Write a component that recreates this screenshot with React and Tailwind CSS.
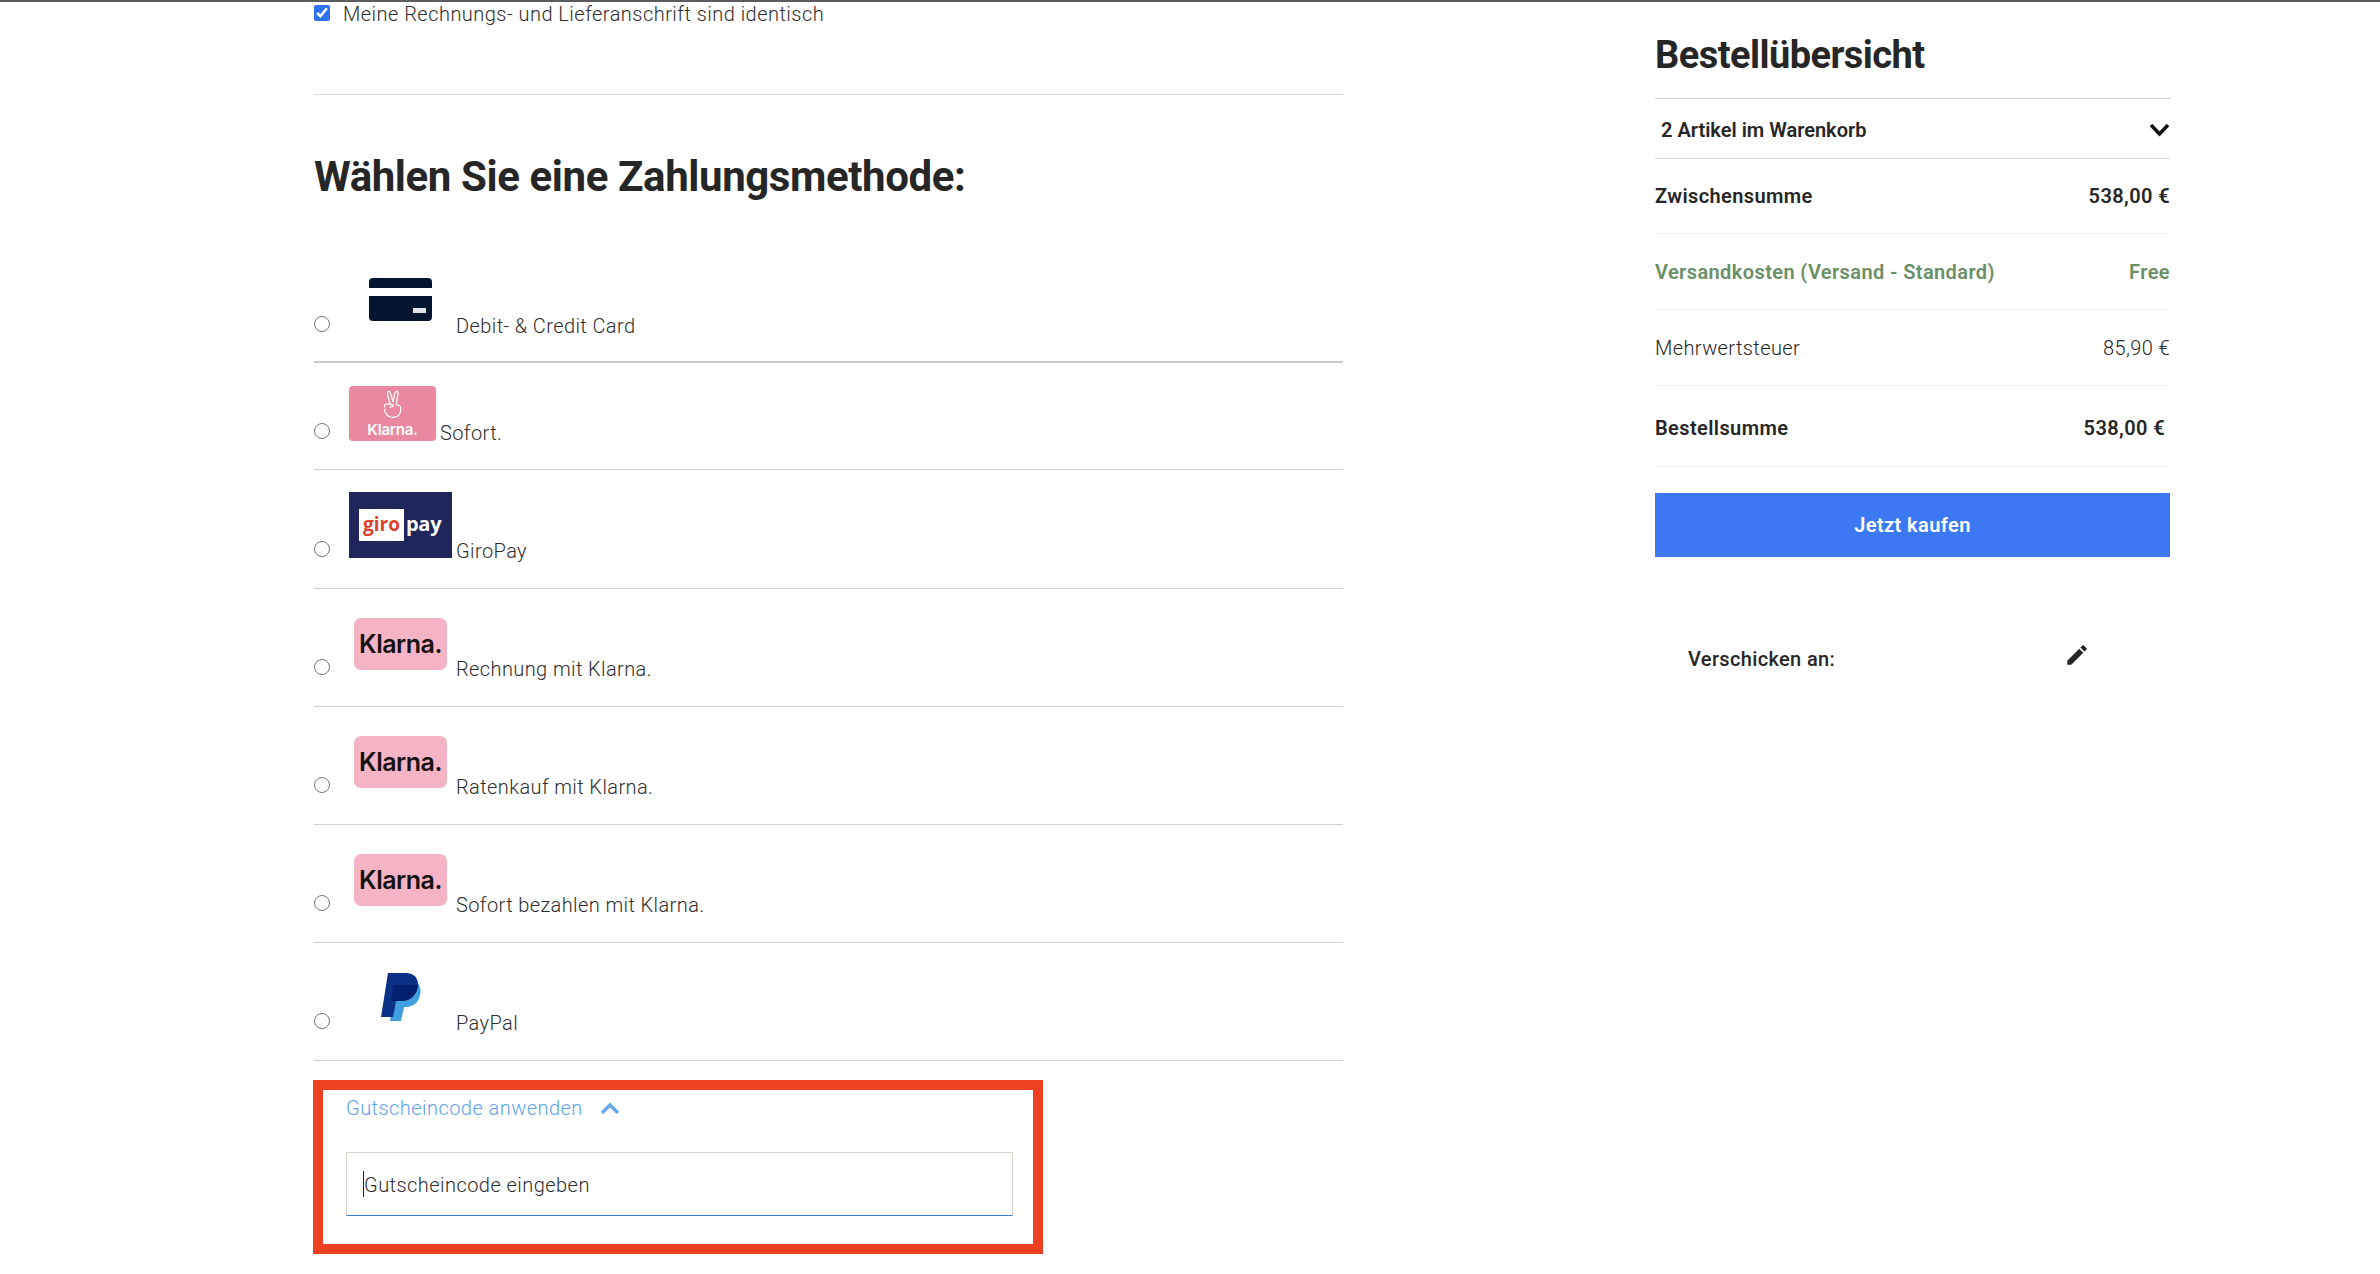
import { MdEdit } from "react-icons/md";

const fontStack = { fontFamily: "Roboto, 'Liberation Sans', sans-serif" };

function CardLogo() {
  return (
    <div className="mx-auto mb-[17px] h-[43px] w-[63px] overflow-hidden rounded-[4px] bg-[#04152f] pt-[10px]">
      <div className="h-[8px] bg-white" />
      <div className="ml-[44px] mt-[12px] h-[5px] w-[13px] bg-[#dfe3ea]" />
    </div>
  );
}

function SofortLogo() {
  return (
    <div className="flex h-[55px] w-[87px] flex-col items-center rounded-[4px] bg-[#ea88a2] pt-[4px] text-white">
      <svg width="22" height="31" viewBox="0 0 24 34" fill="none" stroke="#fff" strokeWidth="1.3" strokeLinejoin="round">
        <path d="M9 17 L6 4 Q5.6 1.5 7.5 1.5 Q9 1.5 9.5 4 L12 13 L14 3.5 Q14.5 1.5 16 1.5 Q18 1.7 17.6 4 L15.5 16" />
        <path d="M3 19 Q2 16 4.5 15.5 L10 15.5 Q13 16 12 18 L8 19 M4 21 Q1.5 22 3 24 M15 16 Q21 16 20.5 22 Q20 30 12 30 Q5 30 4 24" />
      </svg>
      <span className="mt-[2px] text-[15px] font-semibold leading-[14px] tracking-[-0.2px]" style={{ fontFamily: "Inter, sans-serif" }}>Klarna.</span>
    </div>
  );
}

function GiroLogo() {
  return (
    <div className="flex h-[66px] w-[103px] items-center bg-[#20255c] pl-[10px]" style={{ fontFamily: "'Open Sans', sans-serif" }}>
      <span className="flex h-[32px] w-[45px] items-center justify-center bg-white pb-[2px] text-[19px] font-bold leading-none text-[#e0402f]">giro</span>
      <span className="ml-[2px] pb-[2px] text-[20px] font-bold leading-none tracking-[-0.3px] text-white">pay</span>
    </div>
  );
}

function KlarnaLogo() {
  return (
    <div className="mx-auto mb-[11px] flex h-[52px] w-[93px] items-center justify-center rounded-[7px] bg-[#f4b4c6] text-[25px] font-semibold leading-none tracking-[-0.5px] text-[#17120f]" style={{ fontFamily: "Inter, sans-serif" }}>
      Klarna.
    </div>
  );
}

function PayPalLogo() {
  return (
    <svg className="mx-auto mb-[14px] block" width="40" height="48" viewBox="0 0 40 48">
      <path d="M9 48 L20 48 L23 34 L27 34 Q38 32 39.5 20 Q40 13 36 9 L14 12 Z" fill="#3f9fdf" />
      <path d="M7 0 L26 0 Q37 1 37 12 Q35 27 21 28 L15 28 L12 44 L0 44 Z" fill="#0b3187" />
      <path d="M12 12 L37 12 Q35 27 21 28 L10 28 Z" fill="#03206e" />
    </svg>
  );
}

const methods = [
  { label: "Debit- & Credit Card", logo: <CardLogo />, box: "w-[103px]", row: "h-[119px] border-b-2 border-[#cccccc]", pad: "pb-[23px]" },
  { label: "Sofort.", logo: <SofortLogo />, box: "mb-[4px]", row: "h-[107px] border-b border-[#d0d0d0]", pad: "pb-[24px]" },
  { label: "GiroPay", logo: <GiroLogo />, box: "w-[103px] mb-[5px]", row: "h-[119px] border-b border-[#d0d0d0]", pad: "pb-[25px]" },
  { label: "Rechnung mit Klarna.", logo: <KlarnaLogo />, box: "w-[103px]", row: "h-[118px] border-b border-[#d0d0d0]", pad: "pb-[25px]" },
  { label: "Ratenkauf mit Klarna.", logo: <KlarnaLogo />, box: "w-[103px]", row: "h-[118px] border-b border-[#d0d0d0]", pad: "pb-[25px]" },
  { label: "Sofort bezahlen mit Klarna.", logo: <KlarnaLogo />, box: "w-[103px]", row: "h-[118px] border-b border-[#d0d0d0]", pad: "pb-[25px]" },
  { label: "PayPal", logo: <PayPalLogo />, box: "w-[103px]", row: "h-[118px] border-b border-[#d0d0d0]", pad: "pb-[25px]" },
];

function PaymentRow({ method }) {
  return (
    <div className={`flex items-end ${method.row} ${method.pad}`}>
      <input type="radio" name="payment" className="m-0 mb-[6px] h-4 w-4 shrink-0 accent-[#2f72f0]" />
      <div className={`ml-[19px] shrink-0 ${method.box}`}>{method.logo}</div>
      <span className="ml-[4px] text-[20px] font-light leading-[24px] tracking-[0.4px] text-[#2e2e2e]">{method.label}</span>
    </div>
  );
}

function SummaryRow({ label, value, className = "", valueClass = "" }) {
  return (
    <div className={`flex items-center justify-between border-b border-[#f0f0f0] text-[20px] leading-[24px] tracking-[0.4px] ${className}`}>
      <span>{label}</span>
      <span className={valueClass}>{value}</span>
    </div>
  );
}

export default function App() {
  return (
    <div className="h-[1274px] overflow-hidden bg-white text-[#262626]" style={fontStack}>
      <div className="h-[2px] bg-[#5c5c5e]" />

      <div className="flex">
        {/* CHECKOUT */}
        <div className="ml-[314px] w-[1029px]">
          <label className="flex h-[93px] items-start border-b border-[#d8d8d8]">
            <input type="checkbox" defaultChecked className="m-0 mt-[3px] h-4 w-4 accent-[#2f72f0]" />
            <span className="ml-[13px] text-[20px] font-light leading-[24px] tracking-[0.47px] text-[#2e2e2e]">
              Meine Rechnungs- und Lieferanschrift sind identisch
            </span>
          </label>

          <h2 className="pb-[42px] pt-[57px] text-[42px] font-bold leading-[50px] tracking-[-0.4px] text-[#262626]">
            Wählen Sie eine Zahlungsmethode:
          </h2>

          {methods.map((method) => (
            <PaymentRow key={method.label} method={method} />
          ))}

          {/* GUTSCHEIN */}
          <div className="-ml-px mt-[19px] w-[730px] border-[10px] border-[#ee4023] pb-[28px] pl-[23px] pt-[6px]">
            <div className="flex h-[24px] items-center text-[20px] font-light leading-[24px] tracking-[0.45px] text-[#5fa3ee]">
              Gutscheincode anwenden
              <svg className="ml-[17px]" width="20" height="12" viewBox="0 0 20 12" fill="none" stroke="#6aa9ee" strokeWidth="3.5">
                <path d="M2 11 L10 3 L18 11" />
              </svg>
            </div>
            <div className="relative mt-[32px] w-[667px]">
              <input
                placeholder="Gutscheincode eingeben"
                className="block h-[64px] w-full border border-[#d6d6ce] border-b-[#3f78d8] px-[17px] pt-[2px] text-[20px] font-light tracking-[0.45px] outline-none placeholder:text-[#2e2e2e]"
              />
              <span className="absolute left-[17px] top-[19px] h-[26px] w-px bg-[#222]" />
            </div>
          </div>
        </div>

        {/* BESTELLUEBERSICHT */}
        <div className="ml-[312px] w-[515px]">
          <h2 className="h-[97px] border-b border-[#d0d0d0] pt-[29px] text-[38px] font-bold leading-[48px] tracking-[-0.55px]">
            Bestellübersicht
          </h2>
          <div className="flex h-[60px] items-center justify-between border-b border-[#d8d8d0] pl-[6px] pt-[2px] text-[20px] font-semibold leading-[24px]">
            <span>2 Artikel im Warenkorb</span>
            <svg width="21" height="14" viewBox="0 0 21 14" fill="none" stroke="#111" strokeWidth="3.5">
              <path d="M2 2 L10.5 11 L19 2" />
            </svg>
          </div>
          <SummaryRow label="Zwischensumme" value="538,00 €" className="h-[75px] font-semibold" />
          <SummaryRow label="Versandkosten (Versand - Standard)" value="Free" className="h-[76px] font-semibold text-[#6a8f66]" />
          <SummaryRow label="Mehrwertsteuer" value="85,90 €" className="h-[76px] font-light" />
          <SummaryRow label="Bestellsumme" value="538,00 €" className="h-[81px] pt-[3px] font-semibold" valueClass="mr-[5px]" />
          <button className="mt-[26px] h-[64px] w-full bg-[#3c78f4] text-[20px] font-semibold tracking-[0.4px] text-white">
            Jetzt kaufen
          </button>
          <div className="mt-[90px] flex items-start justify-between pl-[33px] pr-[80px]">
            <span className="text-[20px] font-medium leading-[24px] tracking-[0.35px]">Verschicken an:</span>
            <MdEdit size={26} className="-mt-[5px]" />
          </div>
        </div>
      </div>
    </div>
  );
}
